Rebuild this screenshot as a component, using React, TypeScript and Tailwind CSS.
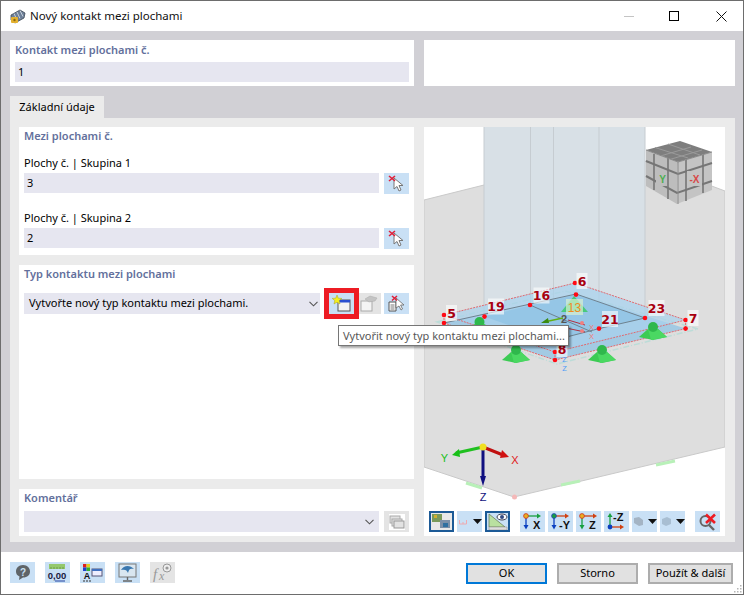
import React from "react";

const Pick = () => (
  <svg width="17" height="17" viewBox="0 0 17 17">
    <path d="M6 3 L6 14 L9 11.5 L11 16 L13 15 L11 10.5 L15 10.5 Z" fill="#fff" stroke="#777" strokeWidth="1" />
    <path d="M1 1 L7 6 M7 1 L1 6" stroke="#e0203a" strokeWidth="1.6" />
  </svg>
);

const Chevron = () => (
  <svg width="9" height="6" viewBox="0 0 9 6">
    <path d="M0.5 0.8 L4.5 4.8 L8.5 0.8" fill="none" stroke="#555" strokeWidth="1.1" />
  </svg>
);

const Btn = ({ children, gray, sel }: { children?: React.ReactNode; gray?: boolean; sel?: boolean }) => (
  <div
    className={`w-[25px] h-[21px] shrink-0 flex items-center justify-center ${gray ? "bg-[#e4e4e4]" : "bg-[#c9e0f5]"} ${sel ? "border-2 border-[#1c5a96]" : ""}`}
  >
    {children}
  </div>
);

const Drop = () => (
  <svg width="9" height="5" viewBox="0 0 9 5">
    <path d="M0 0 H9 L4.5 5 Z" fill="#111" />
  </svg>
);

const AxisIcon = ({ label, c1, c2, dot, right }: { label: string; c1: string; c2: string; dot: string; right?: boolean }) => (
  <svg width="25" height="21" viewBox="0 0 25 21">
    {right ? (
      <>
        <path d="M6 16 V5" stroke={c1} strokeWidth="1.3" />
        <path d="M3.5 6 L6 2 L8.5 6 Z" fill={c1} />
        <path d="M6 16 H17" stroke={c2} strokeWidth="1.3" />
        <path d="M16 13.5 L20 16 L16 18.5 Z" fill={c2} />
        <circle cx="6" cy="16" r="2.4" fill={dot} />
        <text x="9" y="10" fontSize="11" fontWeight="700" fontFamily="'Liberation Sans',sans-serif" fill="#111">{label}</text>
      </>
    ) : (
      <>
        <path d="M6 5 V15" stroke={c1} strokeWidth="1.3" />
        <path d="M3.5 14 L6 18.5 L8.5 14 Z" fill={c1} />
        <path d="M6 5 H18" stroke={c2} strokeWidth="1.3" />
        <path d="M17 2.5 L21 5 L17 7.5 Z" fill={c2} />
        <circle cx="6" cy="5" r="2.4" fill={dot} stroke={dot === "#e8b020" ? "#d03020" : "#2040c0"} strokeWidth="0.8" />
        <text x={label.length > 1 ? 11 : 13} y="18" fontSize="11" fontWeight="700" fontFamily="'Liberation Sans',sans-serif" fill="#111">{label}</text>
      </>
    )}
  </svg>
);

const Heading = ({ children }: { children: React.ReactNode }) => (
  <div className="text-[11px] leading-[18px] font-semibold text-[#63709c]">{children}</div>
);

const Lbl = ({ x, y, t, w }: { x: number; y: number; t: string; w: number }) => (
  <g>
    <rect x={x - w / 2} y={y - 8} width={w} height={16} fill="#fff" fillOpacity="0.6" />
    <text x={x} y={y + 4.5} textAnchor="middle" fontSize="12.5" fontWeight="700" fontFamily="'DejaVu Sans',sans-serif" fill="#a80010">{t}</text>
  </g>
);

const Pyr = ({ x, y, w = 14 }: { x: number; y: number; w?: number }) => (
  <g>
    <path d={`M${x - w} ${y + 10} L${x} ${y + 13} L${x + w} ${y + 10} L${x + 5} ${y + 2} L${x - 5} ${y + 2} Z`} fill="#3ccb54" />
    <path d={`M${x - 5} ${y + 2} L${x - 2} ${y + 13} L${x + w} ${y + 10} L${x + 5} ${y + 2} Z`} fill="#4ad862" />
    <circle cx={x} cy={y} r="5" fill="#2fb84c" />
  </g>
);

const Dot = ({ x, y }: { x: number; y: number }) => <circle cx={x} cy={y} r="2.3" fill="#ff0a14" />;

const Scene = () => (
  <svg className="absolute inset-0" width="301" height="409" viewBox="424 127 301 409">
    <polygon points="424,200 484,185 560,165 645,161 725,191 725,447 514,497 424,467" fill="#dedede" stroke="#c9c9c9" strokeWidth="1" />
    <polygon points="484,127 645,127 645,318 553,340 484,316" fill="#d8e0e6" />
    <path d="M484 127 V316 M530.5 127 V305 M553.5 127 V300 M599 127 V306 M645 127 V318" stroke="#c6ccd1" strokeWidth="1" fill="none" />
    <polygon points="437,322 565,291 698,329 557,364" fill="none" stroke="#bcdcd8" strokeWidth="1.5" strokeDasharray="6 2 1 2" />

    <polygon points="444,323 576,294 685.6,328.6 555,360" fill="#8fc3e4" fillOpacity="0.75" />
    <polygon points="444,315 575,283 685.6,320 555,352" fill="#a8d2ec" fillOpacity="0.7" />
    <polygon points="484,316.6 576,294.6 645,318 553,340" fill="#8fc3e4" fillOpacity="0.75" />
    <path d="M444 323 L576 294 L645 318 L599 328.6 L555 340 M530 305 L592 332" stroke="#6f8290" strokeWidth="1" fill="none" />
    <path d="M444 315 L575 283 L685.6 320 L555 352 Z M444 323 L555 360 L685.6 328.6 M444 315 V323 M555 352 V360 M685.6 320 V328.6" fill="none" stroke="#e06a70" strokeWidth="1" strokeDasharray="2 1" />

    <Pyr x={479.5} y={322} />
    <Pyr x={516} y={350} />
    <Pyr x={602} y={350} />
    <Pyr x={653} y={327} />

    <polygon points="574,296 561,312 588,312" fill="#3cc96a" opacity="0.85" />
    <rect x="566" y="299" width="17" height="16" fill="#d8f0d0" fillOpacity="0.7" />
    <text x="574.5" y="312" textAnchor="middle" fontSize="12" fontFamily="'Liberation Sans',sans-serif" fill="#f08a20">13</text>
    <path d="M563 318 L544 322" stroke="#60b010" strokeWidth="1.5" />
    <path d="M548 318 L541 323 L549 323 Z" fill="#3a8a10" />
    <text x="564" y="323" textAnchor="middle" fontSize="11" fontWeight="700" fontFamily="'Liberation Sans',sans-serif" fill="#555">2</text>
    <path d="M568 320 L585 325 M566 328 L585 332" stroke="#b03040" strokeWidth="1" />
    <circle cx="582" cy="323" r="2" fill="#f08080" />
    <circle cx="582" cy="331" r="2" fill="#f08080" />
    <text x="591.5" y="330" textAnchor="middle" fontSize="7.5" fontFamily="'Liberation Sans',sans-serif" fill="#f07878">X</text>
    <text x="591.5" y="339" textAnchor="middle" fontSize="7.5" fontFamily="'Liberation Sans',sans-serif" fill="#f07878">X</text>
    <text x="564.5" y="362" textAnchor="middle" fontSize="7.5" fontFamily="'Liberation Sans',sans-serif" fill="#4d9cf8">Z</text>
    <text x="564.5" y="371" textAnchor="middle" fontSize="7.5" fontFamily="'Liberation Sans',sans-serif" fill="#4d9cf8">Z</text>

    <Dot x={444} y={315} /><Dot x={444} y={323} /><Dot x={575} y={283} /><Dot x={576} y={294.6} />
    <Dot x={685.6} y={320} /><Dot x={685.6} y={328.6} /><Dot x={555} y={352} /><Dot x={555} y={360} />
    <Dot x={484.5} y={316.6} /><Dot x={530} y={305} /><Dot x={645} y={318} /><Dot x={599} y={328.6} />

    <Lbl x={451.5} y={313} t="5" w={11} />
    <Lbl x={582} y={281} t="6" w={11} />
    <Lbl x={693} y={318} t="7" w={11} />
    <Lbl x={562} y={349} t="8" w={11} />
    <Lbl x={496} y={306.5} t="19" w={16} />
    <Lbl x={541.5} y={295.5} t="16" w={16} />
    <Lbl x={610} y={319} t="21" w={16} />
    <Lbl x={656.5} y={308} t="23" w={16} />

    <polygon points="646,150 680,141 712,152 678,162" fill="#7e7e7e" />
    <path d="M655 147.5 L688 158 M668 144 L700 155 M657 157 L691 147 M668 160 L702 150" stroke="#9a9a9a" strokeWidth="1" />
    <polygon points="646,150 678,162 677,204 646,186" fill="#bdbdbd" />
    <polygon points="678,162 712,152 712,190 677,204" fill="#c4c4c4" />
    <path d="M646 161 L678 174 L712 163 M646 176 L677 193 L712 181" fill="none" stroke="#767676" strokeWidth="2" />
    <path d="M654 154 V190 M668 158 V199 M686 160 V201 M703 155 V193" fill="none" stroke="#767676" strokeWidth="1.6" />
    <path d="M646 150 L678 162 L712 152 M678 162 V204" fill="none" stroke="#8a8a8a" strokeWidth="1" />
    <rect x="656" y="171" width="11" height="15" fill="#bdbdbd" />
    <rect x="687" y="171" width="15" height="15" fill="#c4c4c4" />
    <text x="662.5" y="183" textAnchor="middle" fontSize="10" fontWeight="700" fontFamily="'Liberation Sans',sans-serif" fill="#4caf50">Y</text>
    <text x="694.5" y="183" textAnchor="middle" fontSize="10" fontWeight="700" fontFamily="'Liberation Sans',sans-serif" fill="#d84848">-X</text>

    <path d="M483 447 L456 453" stroke="#20c020" strokeWidth="3" />
    <path d="M459 449 L452 455 L460 457 Z" fill="#18c018" />
    <path d="M483 447 L503 455" stroke="#c01010" strokeWidth="3" />
    <path d="M502 450 L509 457 L500 458 Z" fill="#d01010" />
    <path d="M483 447 V478" stroke="#101080" strokeWidth="3" />
    <path d="M480 476 L483 486 L486 476 Z" fill="#101080" />
    <circle cx="483" cy="447" r="3.5" fill="#f0e020" />
    <text x="444.5" y="462" textAnchor="middle" fontSize="11" fontFamily="'Liberation Sans',sans-serif" fill="#20c020">Y</text>
    <text x="515" y="464" textAnchor="middle" fontSize="11" fontFamily="'Liberation Sans',sans-serif" fill="#e02020">X</text>
    <text x="483" y="501" textAnchor="middle" fontSize="11" fontFamily="'Liberation Sans',sans-serif" fill="#101080">Z</text>
    <path d="M466 483 L482 488 M561 485 L580 481 M656 465 L675 461" stroke="#b8f0b8" strokeWidth="3" />
    <circle cx="514.5" cy="497" r="2.5" fill="#f4b8b8" />
  </svg>
);

const Toolbar = () => (
  <div className="relative flex items-center pl-[5px]">
    <div className="flex gap-[3px]">
      <Btn sel>
        <svg width="21" height="17" viewBox="0 0 21 17">
          <rect x="0" y="0" width="21" height="17" fill="#e8e8e8" />
          <rect x="1" y="1" width="10" height="8" fill="#7a9a5a" />
          <rect x="3" y="2" width="3" height="3" fill="#d0b030" />
          <rect x="9" y="7" width="10" height="8" fill="#7c90a8" />
          <path d="M12 10 h5 v4 h-5 z" fill="#3070a0" />
        </svg>
      </Btn>
      <Btn>
        <div className="flex items-center gap-[6px] ml-[1px]">
          <svg width="8" height="6" viewBox="0 0 8 6"><path d="M0.5 1 V5 H7.5 V1 M4 3 V5" fill="none" stroke="#eeaab0" strokeWidth="1" /></svg>
          <Drop />
        </div>
      </Btn>
      <Btn sel>
        <svg width="21" height="17" viewBox="0 0 21 17">
          <path d="M2 1 L18 14 H2 Z" fill="#b9e0a0" stroke="#708060" strokeWidth="0.8" />
          <path d="M2 14 H20 V17 H2 Z" fill="#ddd" stroke="#888" strokeWidth="0.5" />
          <ellipse cx="15" cy="4" rx="5" ry="3" fill="#fff" stroke="#445" />
          <circle cx="15" cy="4" r="2" fill="#334a80" />
        </svg>
      </Btn>
    </div>
    <div className="flex gap-[3px] ml-[10px]">
      <Btn><AxisIcon label="X" c1="#0a40c0" c2="#18a040" dot="#e8b020" /></Btn>
      <Btn><AxisIcon label="-Y" c1="#0a40c0" c2="#d04010" dot="#18a040" /></Btn>
      <Btn><AxisIcon label="Z" c1="#18a040" c2="#d04010" dot="#e8b020" /></Btn>
      <Btn><AxisIcon label="-Z" c1="#18a040" c2="#d04010" dot="#0a40c0" right /></Btn>
      <Btn>
        <div className="flex items-center gap-[5px] ml-[1px]">
          <svg width="9" height="9" viewBox="0 0 9 9"><path d="M0 1 L5 0 L9 3 V8 L5 9 L0 6 Z" fill="#a4b4c4" /></svg>
          <Drop />
        </div>
      </Btn>
      <Btn>
        <div className="flex items-center gap-[5px] ml-[1px]">
          <svg width="9" height="9" viewBox="0 0 9 9"><path d="M0 2 L5 0 L9 2 V7 L4 9 L0 7 Z" fill="#a8bed2" /></svg>
          <Drop />
        </div>
      </Btn>
    </div>
    <div className="ml-[10px]">
      <Btn>
        <svg width="20" height="18" viewBox="0 0 20 18">
          <circle cx="7.5" cy="8" r="5" fill="none" stroke="#666" strokeWidth="2" />
          <path d="M11 12 L16 17" stroke="#666" strokeWidth="2.4" />
          <path d="M8 1.5 L17 10 M17 1.5 L8 10" stroke="#ee1c24" strokeWidth="2.6" />
        </svg>
      </Btn>
    </div>
  </div>
);

const FootBtn = ({ label, cls }: { label: string; cls: string }) => (
  <div className={`h-[21px] flex items-center justify-center bg-[#e1e1e1] border-2 text-[11px] text-black ${cls}`}>{label}</div>
);

export default function App() {
  return (
    <div
      className="relative w-[744px] h-[595px] flex flex-col overflow-hidden bg-white border-t border-l border-r border-b border-[#6d6d6d] text-black"
      style={{ fontFamily: "'Noto Sans','Open Sans',sans-serif" }}
    >
      <div className="h-[30px] shrink-0 flex items-center bg-white">
        <svg className="ml-[8px]" width="17" height="17" viewBox="0 0 17 17">
          <path d="M2 7 L11 2 L16 5 L15 10 L6 15 L2 12 Z" fill="#6d7f98" stroke="#3c4654" strokeWidth="0.8" />
          <path d="M5 5.5 L8 12 M8 4 L11 10.5 M11 2.5 L14 8.5" stroke="#c5cfda" strokeWidth="1" />
          <rect x="2" y="9" width="7" height="6" rx="1" fill="#e3b130" />
          <circle cx="5.5" cy="12" r="1.2" fill="#8a6710" />
        </svg>
        <span className="ml-[4px] text-[11.5px] leading-none text-[#111]">Nový kontakt mezi plochami</span>
        <div className="ml-auto flex items-center">
          <div className="w-[10px] h-px bg-[#c4c4c4] mr-[35px]" />
          <div className="w-[10px] h-[10px] border border-black mr-[37px]" />
          <svg className="mr-[16px]" width="11" height="11" viewBox="0 0 11 11">
            <path d="M0.5 0.5 L10.5 10.5 M10.5 0.5 L0.5 10.5" stroke="#111" strokeWidth="1" />
          </svg>
        </div>
      </div>

      <div className="h-[521px] shrink-0 bg-[#d1d0d5] pt-[9px] pl-[9px] pr-[8px] flex flex-col">
        <div className="flex gap-[10px] h-[46px] shrink-0">
          <div className="w-[404px] bg-white px-[5px] pt-[1px]">
            <Heading>Kontakt mezi plochami č.</Heading>
            <div className="mt-[3px] h-[20px] bg-[#e6e6f0] flex items-center px-[3px] text-[11px]">1</div>
          </div>
          <div className="flex-1 bg-white" />
        </div>

        <div className="mt-[10px] h-[22px] w-[94px] shrink-0 bg-[#ebebeb] flex items-center justify-center text-[11px]">Základní údaje</div>

        <div className="h-[424px] shrink-0 bg-[#ebebeb] pt-[9px] pb-[6px] pl-[9px] pr-[9px] flex gap-[10px]">
          <div className="w-[395px] flex flex-col gap-[10px]">
            <div className="h-[128px] shrink-0 bg-white px-[5px]">
              <Heading>Mezi plochami č.</Heading>
              <div className="mt-[9px] text-[11px] leading-[18px]">Plochy č. | Skupina 1</div>
              <div className="mt-[1px] flex gap-[5px]">
                <div className="w-[355px] h-[20px] bg-[#e6e6f0] flex items-center px-[3px] text-[11px]">3</div>
                <Btn><Pick /></Btn>
              </div>
              <div className="mt-[15px] text-[11px] leading-[18px]">Plochy č. | Skupina 2</div>
              <div className="mt-[1px] flex gap-[5px]">
                <div className="w-[355px] h-[20px] bg-[#e6e6f0] flex items-center px-[3px] text-[11px]">2</div>
                <Btn><Pick /></Btn>
              </div>
            </div>

            <div className="flex-1 bg-white px-[5px]">
              <Heading>Typ kontaktu mezi plochami</Heading>
              <div className="mt-[10px] flex items-center">
                <div className="w-[296px] h-[21px] bg-[#e6e6f0] flex items-center justify-between pl-[5px] pr-[2px] text-[11px]">
                  <span>Vytvořte nový typ kontaktu mezi plochami.</span>
                  <Chevron />
                </div>
                <div className="ml-[9px] relative z-10 outline-[5px] outline-solid outline-[#ed1c24]">
                  <Btn>
                    <svg width="19" height="17" viewBox="0 0 19 17">
                      <rect x="6" y="5" width="12" height="11" fill="#f4f4f4" stroke="#555" />
                      <rect x="6" y="5" width="12" height="2.5" fill="#2b50d0" />
                      <path d="M5 0 L6.3 3.2 L9.8 3.4 L7.2 5.6 L8 9 L5 7.2 L2 9 L2.8 5.6 L0.2 3.4 L3.7 3.2 Z" fill="#f4f01c" stroke="#a8a020" strokeWidth="0.5" />
                    </svg>
                  </Btn>
                </div>
                <div className="ml-[2px]">
                  <Btn gray>
                    <svg width="19" height="17" viewBox="0 0 19 17">
                      <rect x="2" y="6" width="11" height="10" fill="#f4f4f4" stroke="#aaa" />
                      <path d="M6 4 L11 1 L18 3 L16 6 L10 7 Z" fill="#c4c4c4" stroke="#aaa" strokeWidth="0.5" />
                    </svg>
                  </Btn>
                </div>
                <div className="ml-[3px]">
                  <Btn>
                    <svg width="19" height="17" viewBox="0 0 19 17">
                      <path d="M2 7 H9 V16 H2 Z" fill="#fff" stroke="#555" />
                      <path d="M3.5 10 H7.5 M3.5 12 H7.5 M3.5 14 H7.5" stroke="#555" strokeWidth="0.8" />
                      <path d="M9 3 L9 13 L12 11 L14 15 L15.5 14 L13.6 10 L17 10 Z" fill="#fff" stroke="#666" strokeWidth="0.8" />
                      <path d="M5 1 L10 5.5 M10 1 L5 5.5" stroke="#e0203a" strokeWidth="1.5" />
                    </svg>
                  </Btn>
                </div>
              </div>
            </div>

            <div className="h-[47px] shrink-0 bg-white px-[5px]">
              <Heading>Komentář</Heading>
              <div className="mt-[4px] flex gap-[5px]">
                <div className="w-[355px] h-[21px] bg-[#e6e6f0] flex items-center justify-end pr-[5px]"><Chevron /></div>
                <Btn gray>
                  <svg width="16" height="16" viewBox="0 0 16 16">
                    <rect width="16" height="16" fill="#fff" />
                    <rect x="1" y="2" width="10" height="7" fill="#e2e2e2" stroke="#aaa" />
                    <rect x="3" y="5" width="10" height="7" fill="#e2e2e2" stroke="#aaa" />
                    <rect x="5" y="7" width="10" height="7" fill="#e2e2e2" stroke="#999" />
                  </svg>
                </Btn>
              </div>
            </div>
          </div>

          <div className="relative w-[301px] bg-white flex flex-col justify-end pb-[4px]">
            <Scene />
            <Toolbar />
          </div>
        </div>
      </div>

      <div className="flex-1 bg-white flex items-start pl-[9px] pt-[10px]">
        <div className="flex gap-[10px]">
          <Btn>
            <svg width="18" height="17" viewBox="0 0 18 17">
              <path d="M9 1 C13.5 1 16 4 16 7.5 C16 11 13.5 13.5 9 13.5 L5 16 L5.5 12.5 C3 11.5 2 9.5 2 7.5 C2 4 4.5 1 9 1 Z" fill="#5f6468" />
              <text x="9" y="11.5" textAnchor="middle" fontSize="10" fontWeight="700" fontFamily="'Liberation Sans',sans-serif" fill="#c9e0f5">?</text>
            </svg>
          </Btn>
          <Btn>
            <svg width="23" height="19" viewBox="0 0 23 19">
              <rect x="3" y="1" width="16" height="5" fill="#94c86c" />
              <path d="M5 4 V6 M8 4 V6 M11 4 V6 M14 4 V6 M17 4 V6" stroke="#5f9040" strokeWidth="0.8" />
              <text x="11" y="16" textAnchor="middle" fontSize="9.5" fontWeight="700" fontFamily="'Liberation Sans',sans-serif" fill="#1a1a40">0,00</text>
              <path d="M9 18 H19" stroke="#2040a0" strokeWidth="1" />
            </svg>
          </Btn>
          <Btn>
            <svg width="21" height="19" viewBox="0 0 21 19">
              <rect x="1" y="1" width="3.5" height="3.5" fill="#e02020" />
              <rect x="4.5" y="1" width="3.5" height="3.5" fill="#e0d020" />
              <rect x="1" y="4.5" width="3.5" height="3.5" fill="#2040d0" />
              <rect x="4.5" y="4.5" width="3.5" height="3.5" fill="#30b030" />
              <text x="5" y="16" textAnchor="middle" fontSize="9" fontWeight="700" fontFamily="'Liberation Sans',sans-serif" fill="#111">A</text>
              <path d="M1 18 H9" stroke="#333" strokeDasharray="2 1" />
              <rect x="10" y="6" width="10" height="7" fill="#eef" stroke="#557" />
              <rect x="10" y="6" width="10" height="2" fill="#4070c0" />
            </svg>
          </Btn>
          <Btn>
            <svg width="21" height="19" viewBox="0 0 21 19">
              <rect x="2" y="1" width="17" height="13" fill="#d9e6f0" stroke="#777" />
              <path d="M4 7 C7 2 13 2 17 6 C13 5 12 6 11 10 C10 7 8 6 4 7 Z" fill="#3a78b0" />
              <path d="M10.5 14 V17 M6 18 H15" stroke="#666" strokeWidth="1.4" />
            </svg>
          </Btn>
          <Btn gray>
            <svg width="22" height="19" viewBox="0 0 22 19">
              <text x="1" y="16" fontSize="15" fontStyle="italic" fontFamily="'Liberation Serif',serif" fill="#999">f</text>
              <text x="7" y="17" fontSize="12" fontStyle="italic" fontFamily="'Liberation Serif',serif" fill="#999">x</text>
              <circle cx="15" cy="5" r="4" fill="#eee" stroke="#999" />
              <circle cx="15" cy="5" r="1.6" fill="#999" />
            </svg>
          </Btn>
        </div>
        <div className="ml-auto mr-[10px] mt-[1px] flex gap-[10px]">
          <FootBtn label="OK" cls="w-[81px] border-[#0078d7]" />
          <FootBtn label="Storno" cls="w-[81px] border-[#adadad]" />
          <FootBtn label="Použít & další" cls="w-[85px] border-[#adadad]" />
        </div>
        <svg className="absolute right-[1px] bottom-[1px]" width="9" height="9" viewBox="0 0 9 9">
          <path d="M7 1 h1.5 v1.5 h-1.5 z M4 4 h1.5 v1.5 h-1.5 z M7 4 h1.5 v1.5 h-1.5 z M1 7 h1.5 v1.5 h-1.5 z M4 7 h1.5 v1.5 h-1.5 z M7 7 h1.5 v1.5 h-1.5 z" fill="#b5b5b5" />
        </svg>
      </div>

      <div className="absolute left-[337px] top-[324px] z-20 w-[231px] h-[21px] bg-white border border-[#767676] shadow-[2px_2px_2px_rgba(0,0,0,0.35)] flex items-center pl-[4px] text-[11px] leading-none text-[#575757] whitespace-nowrap">
        Vytvořit nový typ kontaktu mezi plochami...
      </div>
    </div>
  );
}
